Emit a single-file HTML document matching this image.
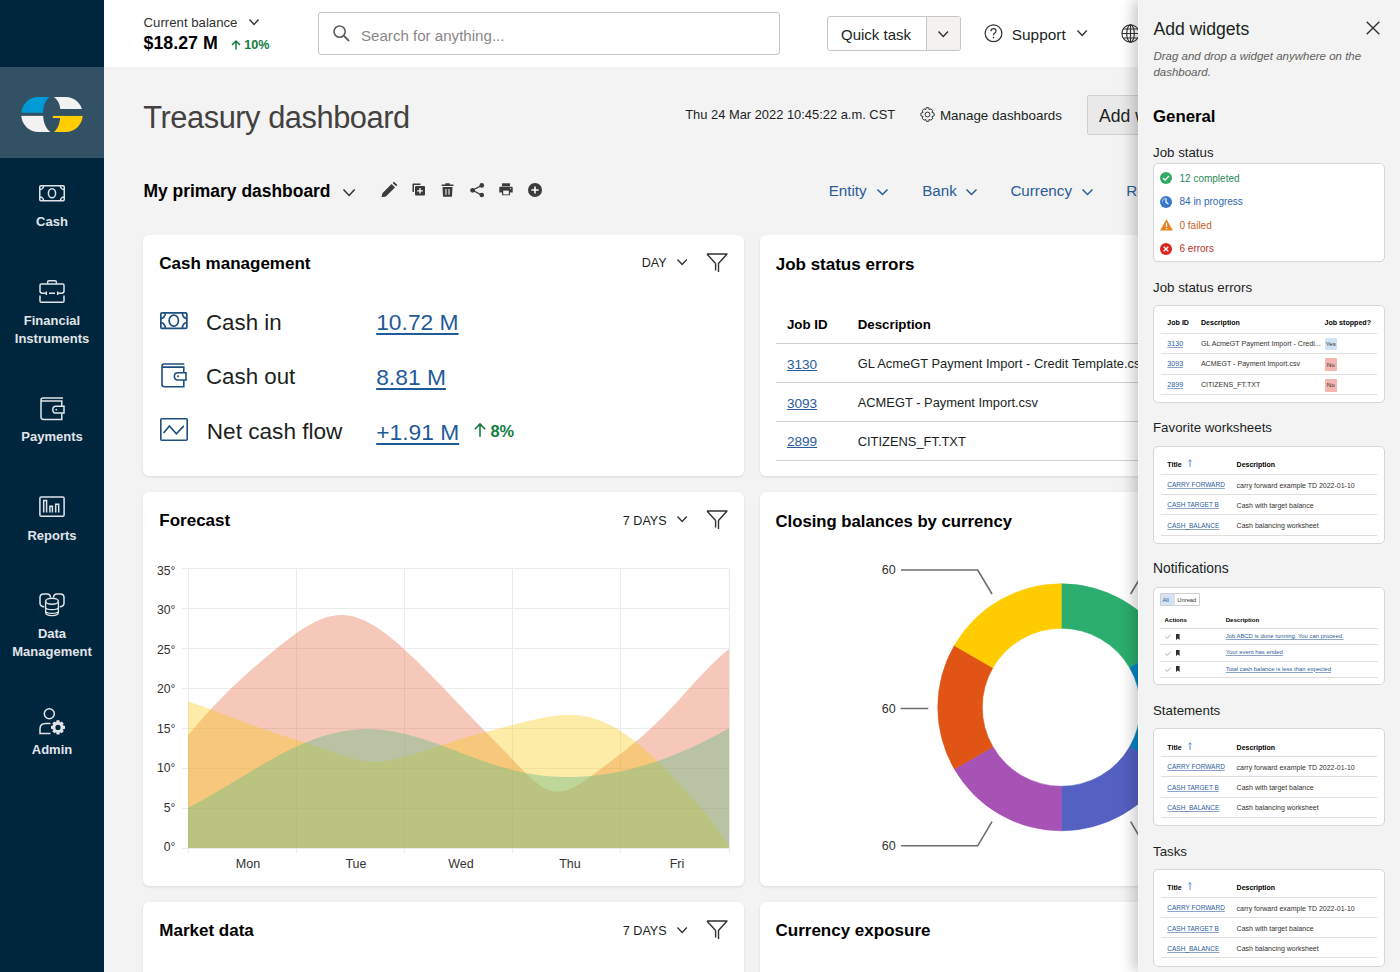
<!DOCTYPE html><html><head><meta charset='utf-8'><style>
*{margin:0;padding:0;box-sizing:border-box}
html,body{width:1400px;height:972px;overflow:hidden;background:#f3f3f3;font-family:"Liberation Sans",sans-serif;color:#201f1e}
.t{position:absolute;white-space:nowrap;line-height:1}
.a{position:absolute}
svg{position:absolute;overflow:visible}
.card{position:absolute;background:#fff;border-radius:6px;box-shadow:0 1px 3px rgba(0,0,0,0.10)}
.pcard{position:absolute;background:#fff;border:1px solid #d6d6d6;border-radius:5px;left:1152.5px;width:232px}
.lnk{color:#2b5c9a;text-decoration:underline}
</style></head><body>
<div class='a' style='left:0;top:0;width:104px;height:972px;background:#00263d'></div>
<div class='a' style='left:0;top:67px;width:104px;height:91px;background:#335165'></div>
<svg style='left:0;top:67px' width='104' height='91' viewBox='0 67 104 91'>
<defs><clipPath id='lg'><ellipse cx='38.5' cy='114.5' rx='17.3' ry='17.6'/><ellipse cx='65.5' cy='114.5' rx='17.3' ry='17.6'/><rect x='38.5' y='96.9' width='27' height='35.2'/></clipPath></defs>
<g clip-path='url(#lg)'>
<rect x='20' y='96' width='32' height='17.6' fill='#009bd6'/>
<rect x='20' y='115.7' width='32' height='17' fill='#f2f2f2'/>
<rect x='52.8' y='96' width='32' height='17.6' fill='#f2f2f2'/>
<rect x='52.8' y='115.7' width='32' height='17' fill='#ffcd00'/>
</g>
<path d='M52,96 C46,98 43.1,105 43.1,112.8 L20,112.8 L20,115.6 L43.1,115.6 C43.5,123 46,130 52,133 C56.5,131 59.8,125 60.1,117.9 L52,117.9 L52,115.7 L86,115.7 L86,109.1 L60.3,109.1 C59.5,102 56.5,98 52,96 Z' fill='#335165'/>
</svg>
<svg style='left:39px;top:185px' width='26' height='17' viewBox='0 0 26 17' fill='none' stroke='#e1e5ea' stroke-width='1.5'>
<rect x='0.75' y='0.75' width='24.5' height='15' rx='1.2'/><ellipse cx='13' cy='8.25' rx='3.6' ry='4.6'/>
<path d='M0.75,4.6 A3.9,3.9 0 0 0 4.6,0.75 M21.4,0.75 A3.9,3.9 0 0 0 25.25,4.6 M25.25,11.9 A3.9,3.9 0 0 0 21.4,15.75 M4.6,15.75 A3.9,3.9 0 0 0 0.75,11.9'/>
</svg>
<div class='t' style='left:0;width:104px;text-align:center;top:215.3px;font-size:13px;font-weight:700;color:#e1e5ea'>Cash</div>
<svg style='left:39px;top:280px' width='26' height='23' viewBox='0 0 26 23' fill='none' stroke='#e1e5ea' stroke-width='1.5'>
<path d='M8.6,3.8 V2.2 Q8.6,0.75 10,0.75 H16 Q17.4,0.75 17.4,2.2 V3.8'/>
<path d='M1,11 V5.3 Q1,3.9 2.4,3.9 H23.6 Q25,3.9 25,5.3 V11 Q25,13.2 22.5,13.2 H19.2 M6.8,13.2 H3.5 Q1,13.2 1,11'/>
<path d='M7.3,11.6 V15 M18.7,11.6 V15 M10,13.2 H16'/>
<path d='M1,15.6 V21 Q1,22.25 2.4,22.25 H23.6 Q25,22.25 25,21 V15.6'/>
</svg>
<div class='t' style='left:0;width:104px;text-align:center;top:313.8px;font-size:13px;font-weight:700;color:#e1e5ea'>Financial</div>
<div class='t' style='left:0;width:104px;text-align:center;top:331.9px;font-size:13px;font-weight:700;color:#e1e5ea'>Instruments</div>
<svg style='left:40px;top:397px' width='25' height='24' viewBox='0 0 25 24' fill='none' stroke='#e1e5ea' stroke-width='1.5'>
<path d='M23,0.9 H3 Q1,0.9 1,3 V20 Q1,22.4 3.4,22.4 H21.8 V16.2 M21.8,9.2 V3.9 H1.2'/>
<path d='M24,9.3 H15.8 Q12.8,9.3 12.8,12.7 Q12.8,16.1 15.8,16.1 H24 Z'/>
<circle cx='16.3' cy='12.7' r='0.9' fill='#e1e5ea' stroke='none'/>
</svg>
<div class='t' style='left:0;width:104px;text-align:center;top:430.0px;font-size:13px;font-weight:700;color:#e1e5ea'>Payments</div>
<svg style='left:39px;top:496px' width='26' height='22' viewBox='0 0 26 22' fill='none' stroke='#e1e5ea' stroke-width='1.5'>
<rect x='0.9' y='0.9' width='24.2' height='19.4' rx='1.3'/>
<path d='M4.7,16.6 V4.5 H7.6 V16.6 M10.9,16.6 V10.2 H13.4 V16.6 M16.7,16.6 V8.3 H19.7 V16.6'/>
</svg>
<div class='t' style='left:0;width:104px;text-align:center;top:528.6px;font-size:13px;font-weight:700;color:#e1e5ea'>Reports</div>
<svg style='left:39px;top:593px' width='26' height='24' viewBox='0 0 26 24' fill='none' stroke='#e1e5ea' stroke-width='1.5'>
<path d='M5.4,13.7 Q1,13.7 1,10 V4.4 Q1,0.9 4.6,0.9 H8 Q11.4,0.9 11.5,4.6'/>
<path d='M20.6,13.7 Q25,13.7 25,10 V4.4 Q25,0.9 21.4,0.9 H18 Q14.6,0.9 14.5,4.6'/>
<ellipse cx='13' cy='8.3' rx='6.4' ry='3'/>
<path d='M6.6,8.3 V19.5 Q6.6,22.6 13,22.6 Q19.4,22.6 19.4,19.5 V8.3 M6.6,14.2 Q6.6,16.6 13,16.6 Q19.4,16.6 19.4,14.2 M6.6,18 Q6.6,20.4 13,20.4 Q19.4,20.4 19.4,18' stroke-width='1.3'/>
</svg>
<div class='t' style='left:0;width:104px;text-align:center;top:626.8px;font-size:13px;font-weight:700;color:#e1e5ea'>Data</div>
<div class='t' style='left:0;width:104px;text-align:center;top:645.1px;font-size:13px;font-weight:700;color:#e1e5ea'>Management</div>
<svg style='left:39px;top:708px' width='27' height='28' viewBox='0 0 27 28' fill='none' stroke='#e1e5ea' stroke-width='1.5'>
<circle cx='10.3' cy='5.8' r='5'/>
<path d='M11.5,15.6 H6.5 Q1,15.6 1,21 V25.6 H11.5'/>
<g fill='#e1e5ea' stroke='none' transform='translate(19,19.4)'>
<path d='M-1.4,-7.2 H1.4 L1.9,-4.9 L3.7,-5.9 L5.7,-3.9 L4.7,-2.1 L7,-1.4 V1.4 L4.7,2.1 L5.7,3.9 L3.7,5.9 L1.9,4.9 L1.4,7.2 H-1.4 L-1.9,4.9 L-3.7,5.9 L-5.7,3.9 L-4.7,2.1 L-7,1.4 V-1.4 L-4.7,-2.1 L-5.7,-3.9 L-3.7,-5.9 L-1.9,-4.9 Z M0,-2.6 A2.6,2.6 0 1 0 0,2.6 A2.6,2.6 0 1 0 0,-2.6 Z' fill-rule='evenodd'/>
<circle r='5.2' fill='none' stroke='#e1e5ea' stroke-width='0'/>
</g>
</svg>
<div class='t' style='left:0;width:104px;text-align:center;top:743.2px;font-size:13px;font-weight:700;color:#e1e5ea'>Admin</div>
<div class='a' style='left:104px;top:0;width:1296px;height:67px;background:#fff'></div>
<div class='t' style='left:143.6px;top:16.0px;font-size:13.2px;color:#323130;'>Current balance</div>
<svg style='left:249px;top:19px' width='10' height='6' viewBox='0 0 10 6'><path d='M0.5,0.5 L5.0,5.5 L9.5,0.5' fill='none' stroke='#323130' stroke-width='1.4'/></svg>
<div class='t' style='left:143.6px;top:34.6px;font-size:17.8px;font-weight:700;color:#000;'>$18.27 M</div>
<svg style='left:230.5px;top:40px' width='10' height='10' viewBox='0 0 10 10'><path d='M5,9.6 V1 M1,5 L5,1 L9,5' fill='none' stroke='#107c41' stroke-width='1.5'/></svg>
<div class='t' style='left:244.3px;top:39.0px;font-size:12.6px;font-weight:700;color:#107c41;'>10%</div>
<div class='a' style='left:318px;top:11.5px;width:462px;height:43.5px;border:1px solid #c8c6c4;border-radius:3px;background:#fff'></div>
<svg style='left:332.5px;top:25px' width='17' height='17' viewBox='0 0 17 17'><circle cx='6.6' cy='6.6' r='5.6' fill='none' stroke='#605e5c' stroke-width='1.6'/><path d='M10.7,10.7 L16,16' stroke='#605e5c' stroke-width='1.8'/></svg>
<div class='t' style='left:361.0px;top:27.6px;font-size:15.1px;color:#8a8886;'>Search for anything...</div>
<div class='a' style='left:826.5px;top:16px;width:134px;height:34.5px;border:1px solid #c8c6c4;border-radius:3px;background:#fff;overflow:hidden'><div class='a' style='left:98px;top:0;width:36px;height:34px;background:#f3f2f1;border-left:1px solid #c8c6c4'></div></div>
<div class='t' style='left:841.0px;top:26.7px;font-size:15px;color:#201f1e;'>Quick task</div>
<svg style='left:937.8px;top:30.5px' width='10.5' height='6' viewBox='0 0 10.5 6'><path d='M0.5,0.5 L5.25,5.5 L10.0,0.5' fill='none' stroke='#323130' stroke-width='1.4'/></svg>
<svg style='left:984px;top:24px' width='19' height='19' viewBox='0 0 19 19'><circle cx='9.5' cy='9.3' r='8.4' fill='none' stroke='#323130' stroke-width='1.2'/><path d='M7,7.3 Q7,4.7 9.5,4.7 Q12,4.7 12,7 Q12,8.6 10.3,9.4 Q9.5,9.8 9.5,11.3' fill='none' stroke='#323130' stroke-width='1.2'/><circle cx='9.5' cy='13.6' r='0.8' fill='#323130'/></svg>
<div class='t' style='left:1011.8px;top:26.8px;font-size:15.4px;color:#201f1e;'>Support</div>
<svg style='left:1076.7px;top:30px' width='10.3' height='6' viewBox='0 0 10.3 6'><path d='M0.5,0.5 L5.15,5.5 L9.8,0.5' fill='none' stroke='#323130' stroke-width='1.4'/></svg>
<svg style='left:1121px;top:24px' width='19' height='19' viewBox='0 0 19 19' fill='none' stroke='#323130' stroke-width='1.1'><circle cx='9.5' cy='9.5' r='8.6'/><ellipse cx='9.5' cy='9.5' rx='3.8' ry='8.6'/><path d='M1,9.5 H18 M2.2,5 H16.8 M2.2,14 H16.8 M9.5,1 V18'/></svg>
<div class='t' style='left:143.3px;top:102.6px;font-size:30.8px;color:#424140;letter-spacing:-0.45px;'>Treasury dashboard</div>
<div class='t' style='left:685.2px;top:109.2px;font-size:12.9px;color:#201f1e;'>Thu 24 Mar 2022 10:45:22 a.m. CST</div>
<svg style='left:920px;top:107px' width='15' height='15' viewBox='-7.5 -7.5 15 15'><path d='M-1.3,-6.8 H1.3 L1.7,-4.8 L3.4,-5.7 L5.3,-3.9 L4.4,-2.1 L6.6,-1.3 V1.3 L4.4,2.1 L5.3,3.9 L3.4,5.7 L1.7,4.8 L1.3,6.8 H-1.3 L-1.7,4.8 L-3.4,5.7 L-5.3,3.9 L-4.4,2.1 L-6.6,1.3 V-1.3 L-4.4,-2.1 L-5.3,-3.9 L-3.4,-5.7 L-1.7,-4.8 Z' fill='none' stroke='#323130' stroke-width='1' stroke-linejoin='round'/><circle r='2.4' fill='none' stroke='#323130' stroke-width='1'/></svg>
<div class='t' style='left:939.9px;top:108.6px;font-size:13.4px;color:#201f1e;'>Manage dashboards</div>
<div class='a' style='left:1087px;top:94.5px;width:140px;height:40px;border:1px solid #d2d0ce;border-radius:2px;background:#e9e9e9'></div>
<div class='t' style='left:1099.0px;top:107.5px;font-size:17.6px;color:#201f1e;'>Add widgets</div>
<div class='t' style='left:143.5px;top:182.7px;font-size:17.45px;font-weight:700;color:#000;'>My primary dashboard</div>
<svg style='left:342.8px;top:188.5px' width='12.2' height='7' viewBox='0 0 12.2 7'><path d='M0.5,0.5 L6.1,6.5 L11.7,0.5' fill='none' stroke='#323130' stroke-width='1.5'/></svg>
<svg style='left:381px;top:182px' width='16' height='16' viewBox='0 0 16 16'><path d='M0.6,15.2 L1.4,11.2 L10.6,2 L14,5.4 L4.8,14.6 Z M11.7,0.9 L13,-0.3 L16.3,3 L15.1,4.3 Z' fill='#3b3b3b'/></svg>
<svg style='left:411.5px;top:183px' width='14' height='13' viewBox='0 0 14 13'><path d='M0.5,9 V1.3 Q0.5,0.5 1.3,0.5 H8.5 V2 H2 V9 Z' fill='#3b3b3b'/><rect x='3' y='3' width='10' height='9.6' rx='1' fill='#3b3b3b'/><path d='M8,5 V10.6 M5.2,7.8 H10.8' stroke='#fff' stroke-width='1.3'/></svg>
<svg style='left:441px;top:182.5px' width='13' height='14' viewBox='0 0 13 14'><path d='M4.3,0.3 H8.7 V1.4 H12.4 V3 H0.6 V1.4 H4.3 Z' fill='#3b3b3b'/><path d='M1.5,4 H11.5 L11,13.2 Q11,13.8 10.3,13.8 H2.7 Q2,13.8 2,13.2 Z' fill='#3b3b3b'/><path d='M5,6 V11.8 M8,6 V11.8' stroke='#f3f3f3' stroke-width='1.1'/></svg>
<svg style='left:469.5px;top:182.5px' width='15' height='15' viewBox='0 0 15 15'><path d='M2.6,7.3 L11.7,2.4 M2.6,7.3 L11.7,12.1' stroke='#3b3b3b' stroke-width='1.3'/><circle cx='2.6' cy='7.3' r='2.4' fill='#3b3b3b'/><circle cx='11.8' cy='2.4' r='2.3' fill='#3b3b3b'/><circle cx='11.8' cy='12' r='2.3' fill='#3b3b3b'/></svg>
<svg style='left:498.5px;top:183px' width='14' height='13' viewBox='0 0 14 13'><path d='M3,0.3 H11 V3.3 H3 Z' fill='#3b3b3b'/><path d='M1,3.8 H13 Q13.7,3.8 13.7,4.6 V9.6 H11 V12.2 H3 V9.6 H0.3 V4.6 Q0.3,3.8 1,3.8 Z' fill='#3b3b3b'/><rect x='4.2' y='7.6' width='5.6' height='3.8' fill='#f3f3f3'/><circle cx='11.6' cy='5.6' r='0.6' fill='#f3f3f3'/></svg>
<svg style='left:527.5px;top:182.5px' width='15' height='15' viewBox='0 0 15 15'><circle cx='7' cy='7' r='7' fill='#3b3b3b'/><path d='M7,3.4 V10.6 M3.4,7 H10.6' stroke='#fff' stroke-width='1.6'/></svg>
<div class='t' style='left:828.7px;top:183.3px;font-size:15.2px;color:#2b5c9a;'>Entity</div>
<svg style='left:877px;top:188.7px' width='11' height='6' viewBox='0 0 11 6'><path d='M0.5,0.5 L5.5,5.5 L10.5,0.5' fill='none' stroke='#2b5c9a' stroke-width='1.5'/></svg>
<div class='t' style='left:922.2px;top:183.3px;font-size:15.2px;color:#2b5c9a;'>Bank</div>
<svg style='left:966.3px;top:188.7px' width='11' height='6' viewBox='0 0 11 6'><path d='M0.5,0.5 L5.5,5.5 L10.5,0.5' fill='none' stroke='#2b5c9a' stroke-width='1.5'/></svg>
<div class='t' style='left:1010.4px;top:183.3px;font-size:15.2px;color:#2b5c9a;'>Currency</div>
<svg style='left:1081.7px;top:188.7px' width='11' height='6' viewBox='0 0 11 6'><path d='M0.5,0.5 L5.5,5.5 L10.5,0.5' fill='none' stroke='#2b5c9a' stroke-width='1.5'/></svg>
<div class='t' style='left:1126.3px;top:183.3px;font-size:15.2px;color:#2b5c9a;'>Reporting</div>
<div class='card' style='left:143px;top:235px;width:601px;height:241px'></div>
<div class='card' style='left:760px;top:235px;width:601px;height:241px'></div>
<div class='card' style='left:143px;top:492px;width:601px;height:394px'></div>
<div class='card' style='left:760px;top:492px;width:601px;height:394px'></div>
<div class='card' style='left:143px;top:902px;width:601px;height:120px'></div>
<div class='card' style='left:760px;top:902px;width:601px;height:120px'></div>
<div class='t' style='left:159.3px;top:255.4px;font-size:17px;font-weight:700;color:#000;'>Cash management</div>
<div class='t' style='left:641.7px;top:257.4px;font-size:12.6px;color:#201f1e;'>DAY</div>
<svg style='left:677px;top:259.3px' width='10.3' height='6' viewBox='0 0 10.3 6'><path d='M0.5,0.5 L5.15,5.5 L9.8,0.5' fill='none' stroke='#323130' stroke-width='1.3'/></svg>
<svg style='left:705.8px;top:253px' width='22' height='20' viewBox='0 0 22 20'><path d='M1,1 H21 L12.5,10.5 V19 M9.6,10.5 L1,1 M9.6,10.5 V17.6' fill='none' stroke='#323130' stroke-width='1.4' stroke-linejoin='round'/></svg>
<svg style='left:160px;top:312px' width='28' height='18' viewBox='0 0 28 18' fill='none' stroke='#1d4f80' stroke-width='1.7'>
<rect x='0.85' y='0.85' width='26' height='15.6' rx='1.2'/><ellipse cx='13.8' cy='8.6' rx='4.7' ry='5.5'/>
<path d='M0.85,6.6 A4.6,5.8 0 0 0 5.4,0.85 M22.3,0.85 A4.6,5.8 0 0 0 26.85,6.6 M26.85,10.6 A4.6,5.8 0 0 0 22.3,16.45 M5.4,16.45 A4.6,5.8 0 0 0 0.85,10.6'/>
</svg>
<svg style='left:161px;top:363px' width='26' height='25' viewBox='0 0 26 25' fill='none' stroke='#1d4f80' stroke-width='1.6'>
<path d='M23.3,1 H3 Q1,1 1,3 V21.3 Q1,23.7 3.4,23.7 H22.8 V17 M22.8,9.7 V4.1 H1.2'/>
<path d='M25,9.7 H16.6 Q13.4,9.7 13.4,13.35 Q13.4,17 16.6,17 H25 Z'/>
<circle cx='17' cy='13.35' r='1' fill='#1d4f80' stroke='none'/>
</svg>
<svg style='left:160px;top:418px' width='28' height='23' viewBox='0 0 28 23' fill='none' stroke='#1d4f80' stroke-width='1.6'>
<rect x='0.8' y='0.8' width='26.4' height='21.4' rx='1'/>
<path d='M3.6,15.1 L9.4,7.9 L16.4,15.8 L23.8,7.9'/>
</svg>
<div class='t' style='left:206.0px;top:311.8px;font-size:22.3px;color:#201f1e;'>Cash in</div>
<div class='t' style='left:206.0px;top:366.1px;font-size:22.3px;color:#201f1e;'>Cash out</div>
<div class='t' style='left:206.8px;top:420.6px;font-size:22.6px;color:#201f1e;'>Net cash flow</div>
<div class='t' style='left:376.2px;top:311.4px;font-size:22.8px;color:#1f5b99;text-decoration:underline;text-underline-offset:3px;text-decoration-thickness:1.5px;'>10.72 M</div>
<div class='t' style='left:376.2px;top:365.7px;font-size:22.8px;color:#1f5b99;text-decoration:underline;text-underline-offset:3px;text-decoration-thickness:1.5px;'>8.81 M</div>
<div class='t' style='left:376.2px;top:420.5px;font-size:22.8px;color:#1f5b99;text-decoration:underline;text-underline-offset:3px;text-decoration-thickness:1.5px;'>+1.91 M</div>
<svg style='left:474px;top:422.5px' width='12' height='14' viewBox='0 0 12 14'><path d='M6,13.8 V1 M0.8,6.2 L6,1 L11.2,6.2' fill='none' stroke='#107c41' stroke-width='1.6'/></svg>
<div class='t' style='left:490.5px;top:423.0px;font-size:16.4px;font-weight:700;color:#107c41;'>8%</div>
<div class='t' style='left:775.7px;top:255.8px;font-size:17px;font-weight:700;color:#000;'>Job status errors</div>
<div class='t' style='left:786.9px;top:317.7px;font-size:13.3px;font-weight:700;color:#000;'>Job ID</div>
<div class='t' style='left:857.7px;top:317.7px;font-size:13.3px;font-weight:700;color:#000;'>Description</div>
<div class='a' style='left:775.5px;top:342.9px;width:600px;height:1px;background:#d2d0ce'></div>
<div class='a' style='left:775.5px;top:381.7px;width:600px;height:1px;background:#d2d0ce'></div>
<div class='a' style='left:775.5px;top:420.5px;width:600px;height:1px;background:#d2d0ce'></div>
<div class='a' style='left:775.5px;top:459.5px;width:600px;height:1px;background:#d2d0ce'></div>
<div class='t' style='left:786.9px;top:357.6px;font-size:13.6px;color:#2b5c9a;text-decoration:underline;'>3130</div>
<div class='t' style='left:857.7px;top:358.2px;font-size:12.9px;color:#201f1e;'>GL AcmeGT Payment Import - Credit Template.csv</div>
<div class='t' style='left:786.9px;top:396.5px;font-size:13.6px;color:#2b5c9a;text-decoration:underline;'>3093</div>
<div class='t' style='left:857.7px;top:397.1px;font-size:12.9px;color:#201f1e;'>ACMEGT - Payment Import.csv</div>
<div class='t' style='left:786.9px;top:435.3px;font-size:13.6px;color:#2b5c9a;text-decoration:underline;'>2899</div>
<div class='t' style='left:857.7px;top:435.9px;font-size:12.9px;color:#201f1e;'>CITIZENS_FT.TXT</div>
<div class='t' style='left:159.3px;top:512.0px;font-size:17px;font-weight:700;color:#000;'>Forecast</div>
<div class='t' style='left:622.8px;top:514.5px;font-size:12.6px;color:#201f1e;'>7 DAYS</div>
<svg style='left:677px;top:515.8px' width='10.3' height='6' viewBox='0 0 10.3 6'><path d='M0.5,0.5 L5.15,5.5 L9.8,0.5' fill='none' stroke='#323130' stroke-width='1.3'/></svg>
<svg style='left:705.8px;top:510px' width='22' height='20' viewBox='0 0 22 20'><path d='M1,1 H21 L12.5,10.5 V19 M9.6,10.5 L1,1 M9.6,10.5 V17.6' fill='none' stroke='#323130' stroke-width='1.4' stroke-linejoin='round'/></svg>
<svg style='left:0;top:0' width='1400' height='972' viewBox='0 0 1400 972'><path d='M182,848.5 H729.5' stroke='#ebebeb' stroke-width='1'/><path d='M182,808.5 H729.5' stroke='#ebebeb' stroke-width='1'/><path d='M182,768.5 H729.5' stroke='#ebebeb' stroke-width='1'/><path d='M182,728.5 H729.5' stroke='#ebebeb' stroke-width='1'/><path d='M182,688.5 H729.5' stroke='#ebebeb' stroke-width='1'/><path d='M182,648.5 H729.5' stroke='#ebebeb' stroke-width='1'/><path d='M182,608.5 H729.5' stroke='#ebebeb' stroke-width='1'/><path d='M182,568.5 H729.5' stroke='#ebebeb' stroke-width='1'/><path d='M188.5,569 V853' stroke='#ebebeb' stroke-width='1'/><path d='M296.5,569 V853' stroke='#ebebeb' stroke-width='1'/><path d='M404.5,569 V853' stroke='#ebebeb' stroke-width='1'/><path d='M512.5,569 V853' stroke='#ebebeb' stroke-width='1'/><path d='M620.5,569 V853' stroke='#ebebeb' stroke-width='1'/><path d='M729.5,569 V853' stroke='#ebebeb' stroke-width='1'/><path d='M188.0,735.3 L190.7,732.2 L193.4,728.9 L196.2,725.7 L198.9,722.5 L201.6,719.4 L204.3,716.3 L207.0,713.3 L209.7,710.4 L212.5,707.4 L215.2,704.5 L217.9,701.7 L220.6,698.9 L223.3,696.1 L226.1,693.4 L228.8,690.7 L231.5,688.1 L234.2,685.5 L236.9,682.9 L239.7,680.4 L242.4,677.8 L245.1,675.4 L247.8,672.9 L250.5,670.5 L253.2,668.1 L256.0,665.7 L258.7,663.4 L261.4,661.0 L264.1,658.7 L266.8,656.5 L269.6,654.2 L272.3,652.0 L275.0,649.7 L277.7,647.5 L280.4,645.3 L283.2,643.2 L285.9,641.1 L288.6,639.0 L291.3,636.9 L294.0,634.9 L296.7,633.0 L299.5,631.1 L302.2,629.3 L304.9,627.6 L307.6,626.0 L310.3,624.4 L313.1,623.0 L315.8,621.6 L318.5,620.4 L321.2,619.2 L323.9,618.2 L326.6,617.3 L329.4,616.6 L332.1,616.0 L334.8,615.5 L337.5,615.2 L340.2,615.0 L343.0,615.0 L345.7,615.2 L348.4,615.5 L351.1,616.0 L353.8,616.6 L356.6,617.4 L359.3,618.4 L362.0,619.4 L364.7,620.6 L367.4,622.0 L370.1,623.4 L372.9,625.0 L375.6,626.6 L378.3,628.4 L381.0,630.3 L383.7,632.2 L386.5,634.3 L389.2,636.4 L391.9,638.6 L394.6,640.8 L397.3,643.1 L400.1,645.5 L402.8,647.9 L405.5,650.4 L408.2,652.9 L410.9,655.4 L413.6,658.0 L416.4,660.6 L419.1,663.3 L421.8,666.0 L424.5,668.7 L427.2,671.4 L430.0,674.1 L432.7,676.9 L435.4,679.7 L438.1,682.5 L440.8,685.3 L443.5,688.1 L446.3,691.0 L449.0,693.8 L451.7,696.7 L454.4,699.5 L457.1,702.4 L459.9,705.2 L462.6,708.1 L465.3,710.9 L468.0,713.8 L470.7,716.6 L473.5,719.4 L476.2,722.2 L478.9,725.0 L481.6,727.8 L484.3,730.5 L487.0,733.3 L489.8,736.0 L492.5,738.8 L495.2,741.6 L497.9,744.3 L500.6,747.1 L503.4,749.9 L506.1,752.7 L508.8,755.5 L511.5,758.4 L514.2,761.2 L516.9,764.1 L519.7,767.0 L522.4,769.8 L525.1,772.6 L527.8,775.3 L530.5,777.8 L533.3,780.2 L536.0,782.5 L538.7,784.6 L541.4,786.4 L544.1,788.0 L546.9,789.3 L549.6,790.4 L552.3,791.1 L555.0,791.5 L557.7,791.6 L560.4,791.4 L563.2,790.9 L565.9,790.3 L568.6,789.4 L571.3,788.3 L574.0,787.0 L576.8,785.5 L579.5,784.0 L582.2,782.2 L584.9,780.4 L587.6,778.5 L590.4,776.6 L593.1,774.6 L595.8,772.6 L598.5,770.5 L601.2,768.5 L603.9,766.5 L606.7,764.5 L609.4,762.4 L612.1,760.4 L614.8,758.3 L617.5,756.2 L620.3,754.1 L623.0,752.0 L625.7,749.9 L628.4,747.7 L631.1,745.5 L633.8,743.3 L636.6,741.0 L639.3,738.7 L642.0,736.4 L644.7,734.0 L647.4,731.6 L650.2,729.1 L652.9,726.6 L655.6,724.0 L658.3,721.3 L661.0,718.6 L663.8,715.9 L666.5,713.1 L669.2,710.2 L671.9,707.3 L674.6,704.4 L677.3,701.4 L680.1,698.5 L682.8,695.5 L685.5,692.5 L688.2,689.5 L690.9,686.5 L693.7,683.5 L696.4,680.6 L699.1,677.7 L701.8,674.8 L704.5,671.9 L707.3,669.1 L710.0,666.3 L712.7,663.6 L715.4,661.0 L718.1,658.4 L720.8,655.9 L723.6,653.5 L726.3,651.2 L729.0,648.9 L729,848.0 L188,848.0 Z' fill='rgba(229,110,70,0.38)'/><path d='M188.0,701.4 L190.7,702.3 L193.4,703.2 L196.2,704.2 L198.9,705.1 L201.6,706.1 L204.3,707.1 L207.0,708.1 L209.7,709.1 L212.5,710.1 L215.2,711.1 L217.9,712.1 L220.6,713.1 L223.3,714.2 L226.1,715.2 L228.8,716.2 L231.5,717.3 L234.2,718.3 L236.9,719.3 L239.7,720.3 L242.4,721.4 L245.1,722.4 L247.8,723.4 L250.5,724.4 L253.2,725.4 L256.0,726.4 L258.7,727.4 L261.4,728.4 L264.1,729.3 L266.8,730.3 L269.6,731.2 L272.3,732.1 L275.0,733.1 L277.7,734.0 L280.4,734.9 L283.2,735.7 L285.9,736.6 L288.6,737.5 L291.3,738.3 L294.0,739.2 L296.7,740.0 L299.5,740.9 L302.2,741.7 L304.9,742.6 L307.6,743.5 L310.3,744.4 L313.1,745.3 L315.8,746.2 L318.5,747.1 L321.2,748.0 L323.9,749.0 L326.6,750.0 L329.4,751.0 L332.1,751.9 L334.8,752.9 L337.5,753.9 L340.2,754.8 L343.0,755.7 L345.7,756.6 L348.4,757.4 L351.1,758.2 L353.8,758.9 L356.6,759.6 L359.3,760.1 L362.0,760.7 L364.7,761.1 L367.4,761.4 L370.1,761.6 L372.9,761.8 L375.6,761.8 L378.3,761.7 L381.0,761.5 L383.7,761.2 L386.5,760.8 L389.2,760.4 L391.9,759.8 L394.6,759.3 L397.3,758.6 L400.1,757.9 L402.8,757.2 L405.5,756.5 L408.2,755.7 L410.9,754.9 L413.6,754.1 L416.4,753.3 L419.1,752.5 L421.8,751.6 L424.5,750.8 L427.2,749.9 L430.0,749.0 L432.7,748.1 L435.4,747.2 L438.1,746.3 L440.8,745.4 L443.5,744.6 L446.3,743.7 L449.0,742.8 L451.7,741.9 L454.4,741.0 L457.1,740.1 L459.9,739.3 L462.6,738.4 L465.3,737.6 L468.0,736.8 L470.7,736.0 L473.5,735.2 L476.2,734.4 L478.9,733.7 L481.6,733.0 L484.3,732.3 L487.0,731.6 L489.8,730.9 L492.5,730.2 L495.2,729.5 L497.9,728.8 L500.6,728.1 L503.4,727.4 L506.1,726.7 L508.8,726.0 L511.5,725.2 L514.2,724.5 L516.9,723.8 L519.7,723.2 L522.4,722.5 L525.1,721.8 L527.8,721.1 L530.5,720.5 L533.3,719.9 L536.0,719.3 L538.7,718.7 L541.4,718.1 L544.1,717.6 L546.9,717.1 L549.6,716.6 L552.3,716.2 L555.0,715.9 L557.7,715.6 L560.4,715.3 L563.2,715.1 L565.9,715.0 L568.6,715.0 L571.3,715.0 L574.0,715.1 L576.8,715.3 L579.5,715.5 L582.2,715.9 L584.9,716.4 L587.6,716.9 L590.4,717.6 L593.1,718.3 L595.8,719.2 L598.5,720.1 L601.2,721.1 L603.9,722.2 L606.7,723.4 L609.4,724.7 L612.1,726.1 L614.8,727.6 L617.5,729.1 L620.3,730.8 L623.0,732.5 L625.7,734.4 L628.4,736.3 L631.1,738.3 L633.8,740.4 L636.6,742.5 L639.3,744.7 L642.0,747.0 L644.7,749.4 L647.4,751.8 L650.2,754.3 L652.9,756.9 L655.6,759.4 L658.3,762.1 L661.0,764.8 L663.8,767.5 L666.5,770.3 L669.2,773.1 L671.9,775.9 L674.6,778.7 L677.3,781.6 L680.1,784.5 L682.8,787.5 L685.5,790.4 L688.2,793.4 L690.9,796.4 L693.7,799.4 L696.4,802.5 L699.1,805.7 L701.8,808.9 L704.5,812.2 L707.3,815.6 L710.0,819.1 L712.7,822.7 L715.4,826.4 L718.1,830.2 L720.8,834.2 L723.6,838.3 L726.3,842.6 L729.0,847.1 L729,848.0 L188,848.0 Z' fill='rgba(250,200,20,0.37)'/><path d='M188.0,807.7 L190.7,806.3 L193.4,804.9 L196.2,803.5 L198.9,802.0 L201.6,800.5 L204.3,799.0 L207.0,797.5 L209.7,796.0 L212.5,794.4 L215.2,792.8 L217.9,791.2 L220.6,789.6 L223.3,788.0 L226.1,786.4 L228.8,784.8 L231.5,783.1 L234.2,781.5 L236.9,779.8 L239.7,778.2 L242.4,776.5 L245.1,774.9 L247.8,773.2 L250.5,771.6 L253.2,770.0 L256.0,768.4 L258.7,766.8 L261.4,765.2 L264.1,763.6 L266.8,762.0 L269.6,760.5 L272.3,759.0 L275.0,757.5 L277.7,756.0 L280.4,754.5 L283.2,753.1 L285.9,751.7 L288.6,750.3 L291.3,749.0 L294.0,747.7 L296.7,746.4 L299.5,745.2 L302.2,744.0 L304.9,742.8 L307.6,741.7 L310.3,740.7 L313.1,739.6 L315.8,738.6 L318.5,737.7 L321.2,736.8 L323.9,735.9 L326.6,735.1 L329.4,734.4 L332.1,733.6 L334.8,733.0 L337.5,732.4 L340.2,731.8 L343.0,731.3 L345.7,730.8 L348.4,730.4 L351.1,730.0 L353.8,729.7 L356.6,729.4 L359.3,729.3 L362.0,729.1 L364.7,729.0 L367.4,729.0 L370.1,729.0 L372.9,729.1 L375.6,729.3 L378.3,729.5 L381.0,729.7 L383.7,730.0 L386.5,730.4 L389.2,730.8 L391.9,731.2 L394.6,731.7 L397.3,732.3 L400.1,732.9 L402.8,733.5 L405.5,734.1 L408.2,734.8 L410.9,735.6 L413.6,736.3 L416.4,737.1 L419.1,737.9 L421.8,738.8 L424.5,739.6 L427.2,740.5 L430.0,741.4 L432.7,742.4 L435.4,743.3 L438.1,744.3 L440.8,745.3 L443.5,746.3 L446.3,747.3 L449.0,748.3 L451.7,749.3 L454.4,750.3 L457.1,751.3 L459.9,752.4 L462.6,753.4 L465.3,754.4 L468.0,755.4 L470.7,756.5 L473.5,757.5 L476.2,758.5 L478.9,759.5 L481.6,760.4 L484.3,761.4 L487.0,762.3 L489.8,763.3 L492.5,764.2 L495.2,765.0 L497.9,765.9 L500.6,766.7 L503.4,767.5 L506.1,768.3 L508.8,769.1 L511.5,769.8 L514.2,770.5 L516.9,771.1 L519.7,771.7 L522.4,772.3 L525.1,772.8 L527.8,773.3 L530.5,773.8 L533.3,774.3 L536.0,774.7 L538.7,775.0 L541.4,775.4 L544.1,775.7 L546.9,775.9 L549.6,776.2 L552.3,776.4 L555.0,776.6 L557.7,776.7 L560.4,776.8 L563.2,776.9 L565.9,776.9 L568.6,776.9 L571.3,776.9 L574.0,776.9 L576.8,776.8 L579.5,776.7 L582.2,776.5 L584.9,776.4 L587.6,776.2 L590.4,775.9 L593.1,775.7 L595.8,775.4 L598.5,775.1 L601.2,774.7 L603.9,774.3 L606.7,773.9 L609.4,773.5 L612.1,773.0 L614.8,772.5 L617.5,772.0 L620.3,771.4 L623.0,770.8 L625.7,770.2 L628.4,769.6 L631.1,768.9 L633.8,768.2 L636.6,767.5 L639.3,766.8 L642.0,766.0 L644.7,765.2 L647.4,764.4 L650.2,763.5 L652.9,762.6 L655.6,761.7 L658.3,760.8 L661.0,759.8 L663.8,758.9 L666.5,757.8 L669.2,756.8 L671.9,755.8 L674.6,754.7 L677.3,753.6 L680.1,752.4 L682.8,751.3 L685.5,750.1 L688.2,748.9 L690.9,747.7 L693.7,746.4 L696.4,745.2 L699.1,743.9 L701.8,742.5 L704.5,741.2 L707.3,739.8 L710.0,738.5 L712.7,737.0 L715.4,735.6 L718.1,734.2 L720.8,732.7 L723.6,731.2 L726.3,729.7 L729.0,728.8 L729,848.0 L188,848.0 Z' fill='rgba(110,190,135,0.44)'/></svg>
<div class='t' style='left:140px;width:35.5px;text-align:right;top:841.3px;font-size:12.2px;color:#323130'>0°</div>
<div class='t' style='left:140px;width:35.5px;text-align:right;top:801.8px;font-size:12.2px;color:#323130'>5°</div>
<div class='t' style='left:140px;width:35.5px;text-align:right;top:762.3px;font-size:12.2px;color:#323130'>10°</div>
<div class='t' style='left:140px;width:35.5px;text-align:right;top:722.7px;font-size:12.2px;color:#323130'>15°</div>
<div class='t' style='left:140px;width:35.5px;text-align:right;top:683.2px;font-size:12.2px;color:#323130'>20°</div>
<div class='t' style='left:140px;width:35.5px;text-align:right;top:643.7px;font-size:12.2px;color:#323130'>25°</div>
<div class='t' style='left:140px;width:35.5px;text-align:right;top:604.1px;font-size:12.2px;color:#323130'>30°</div>
<div class='t' style='left:140px;width:35.5px;text-align:right;top:564.6px;font-size:12.2px;color:#323130'>35°</div>
<div class='t' style='left:218px;width:60px;text-align:center;top:857.6px;font-size:12.5px;color:#323130'>Mon</div>
<div class='t' style='left:326px;width:60px;text-align:center;top:857.6px;font-size:12.5px;color:#323130'>Tue</div>
<div class='t' style='left:431px;width:60px;text-align:center;top:857.6px;font-size:12.5px;color:#323130'>Wed</div>
<div class='t' style='left:540px;width:60px;text-align:center;top:857.6px;font-size:12.5px;color:#323130'>Thu</div>
<div class='t' style='left:647px;width:60px;text-align:center;top:857.6px;font-size:12.5px;color:#323130'>Fri</div>
<div class='t' style='left:775.5px;top:514.0px;font-size:16.7px;font-weight:700;color:#000;'>Closing balances by currency</div>
<svg style='left:0;top:0' width='1400' height='972' viewBox='0 0 1400 972'><path d='M1061.30,583.80 A123.5,123.5 0 0 1 1168.25,645.55 L1129.72,667.80 A79,79 0 0 0 1061.30,628.30 Z' fill='#2bae6e' stroke='#2bae6e' stroke-width='0.6'/><path d='M1168.25,645.55 A123.5,123.5 0 0 1 1168.25,769.05 L1129.72,746.80 A79,79 0 0 0 1129.72,667.80 Z' fill='#0087c6' stroke='#0087c6' stroke-width='0.6'/><path d='M1168.25,769.05 A123.5,123.5 0 0 1 1061.30,830.80 L1061.30,786.30 A79,79 0 0 0 1129.72,746.80 Z' fill='#5460c2' stroke='#5460c2' stroke-width='0.6'/><path d='M1061.30,830.80 A123.5,123.5 0 0 1 954.35,769.05 L992.88,746.80 A79,79 0 0 0 1061.30,786.30 Z' fill='#a653b5' stroke='#a653b5' stroke-width='0.6'/><path d='M954.35,769.05 A123.5,123.5 0 0 1 954.35,645.55 L992.88,667.80 A79,79 0 0 0 992.88,746.80 Z' fill='#e05516' stroke='#e05516' stroke-width='0.6'/><path d='M954.35,645.55 A123.5,123.5 0 0 1 1061.30,583.80 L1061.30,628.30 A79,79 0 0 0 992.88,667.80 Z' fill='#ffcc00' stroke='#ffcc00' stroke-width='0.6'/><path d='M901,570 H977.7 L992,594 M900.6,708.5 H928.3 M901,845.8 H977.7 L992,821.6 M1130.6,594 L1145,570 M1130.6,821.6 L1145,845.8' fill='none' stroke='#6e6e6e' stroke-width='1.6'/></svg>
<div class='t' style='left:881.8px;top:564.1px;font-size:12.5px;color:#323130;'>60</div>
<div class='t' style='left:881.8px;top:702.8px;font-size:12.5px;color:#323130;'>60</div>
<div class='t' style='left:881.8px;top:839.9px;font-size:12.5px;color:#323130;'>60</div>
<div class='t' style='left:159.3px;top:922.4px;font-size:17px;font-weight:700;color:#000;'>Market data</div>
<div class='t' style='left:622.8px;top:924.9px;font-size:12.6px;color:#201f1e;'>7 DAYS</div>
<svg style='left:677px;top:926.9px' width='10.3' height='6' viewBox='0 0 10.3 6'><path d='M0.5,0.5 L5.15,5.5 L9.8,0.5' fill='none' stroke='#323130' stroke-width='1.3'/></svg>
<svg style='left:705.8px;top:920.4px' width='22' height='20' viewBox='0 0 22 20'><path d='M1,1 H21 L12.5,10.5 V19 M9.6,10.5 L1,1 M9.6,10.5 V17.6' fill='none' stroke='#323130' stroke-width='1.4' stroke-linejoin='round'/></svg>
<div class='t' style='left:775.5px;top:922.4px;font-size:17px;font-weight:700;color:#000;'>Currency exposure</div>
<div class='a' style='left:1138px;top:0;width:262px;height:972px;background:#f3f3f3;border-left:1px solid #f8f8f8;box-shadow:-5px 0 13px rgba(0,0,0,0.21)'></div>
<div class='t' style='left:1153.4px;top:20.5px;font-size:17.6px;color:#201f1e;'>Add widgets</div>
<svg style='left:1366px;top:21px' width='14' height='14' viewBox='0 0 14 14'><path d='M0.7,0.7 L13.3,13.3 M13.3,0.7 L0.7,13.3' stroke='#323130' stroke-width='1.4'/></svg>
<div class='t' style='left:1153.4px;top:50.7px;font-size:11.5px;color:#605e5c;font-style:italic;'>Drag and drop a widget anywhere on the</div>
<div class='t' style='left:1153.4px;top:66.5px;font-size:11.5px;color:#605e5c;font-style:italic;'>dashboard.</div>
<div class='t' style='left:1153.0px;top:108.6px;font-size:16.8px;font-weight:700;color:#000;'>General</div>
<div class='t' style='left:1153.0px;top:145.7px;font-size:13.3px;color:#201f1e;'>Job status</div>
<div class='pcard' style='top:163.2px;height:99px'></div>
<div class='t' style='left:1179.5px;top:173.8px;font-size:10px;color:#2b8a57;'>12 completed</div>
<svg style='left:1160px;top:172.3px' width='12' height='12' viewBox='0 0 12 12'><circle cx='6' cy='6' r='6' fill='#2eaa62'/><path d='M3,6.1 L5.1,8.1 L9,4' fill='none' stroke='#fff' stroke-width='1.4'/></svg>
<div class='t' style='left:1179.5px;top:197.1px;font-size:10px;color:#2f67ad;'>84 in progress</div>
<svg style='left:1160px;top:195.6px' width='12' height='12' viewBox='0 0 12 12'><circle cx='6' cy='6' r='6' fill='#3a78c8'/><path d='M6,2.6 V6.2 L8.4,8' fill='none' stroke='#fff' stroke-width='1.2'/><path d='M2.2,6 A3.8,3.8 0 0 1 6,2.2' fill='none' stroke='#fff' stroke-width='0.6'/></svg>
<div class='t' style='left:1179.5px;top:220.8px;font-size:10px;color:#c8601c;'>0 failed</div>
<svg style='left:1159.5px;top:218.8px' width='13' height='12' viewBox='0 0 13 12'><path d='M6.5,0.3 L12.9,11.6 H0.1 Z' fill='#e8821e'/><path d='M6.5,4 V7.8' stroke='#fff' stroke-width='1.3'/><circle cx='6.5' cy='9.6' r='0.75' fill='#fff'/></svg>
<div class='t' style='left:1179.5px;top:244.1px;font-size:10px;color:#b8322a;'>6 errors</div>
<svg style='left:1160px;top:242.8px' width='12' height='12' viewBox='0 0 12 12'><circle cx='6' cy='6' r='6' fill='#d9261c'/><path d='M3.7,3.7 L8.3,8.3 M8.3,3.7 L3.7,8.3' stroke='#fff' stroke-width='1.3'/></svg>
<div class='t' style='left:1153.0px;top:280.9px;font-size:13.3px;color:#201f1e;'>Job status errors</div>
<div class='pcard' style='top:304.5px;height:98.5px'></div>
<div class='t' style='left:1167.3px;top:320.0px;font-size:7.1px;font-weight:700;color:#000;'>Job ID</div>
<div class='t' style='left:1200.9px;top:320.0px;font-size:7.1px;font-weight:700;color:#000;'>Description</div>
<div class='t' style='left:1324.5px;top:320.0px;font-size:7.1px;font-weight:700;color:#000;'>Job stopped?</div>
<div class='a' style='left:1161px;top:332.9px;width:215.5999999999999px;height:1px;background:#e1dfdd'></div>
<div class='a' style='left:1161px;top:353.1px;width:215.5999999999999px;height:1px;background:#e1dfdd'></div>
<div class='a' style='left:1161px;top:373.6px;width:215.5999999999999px;height:1px;background:#e1dfdd'></div>
<div class='a' style='left:1161px;top:393.8px;width:215.5999999999999px;height:1px;background:#e1dfdd'></div>
<div class='t' style='left:1167.3px;top:340.5px;font-size:7.1px;color:#2b5c9a;text-decoration:underline;text-decoration-color:rgba(43,92,154,0.55);'>3130</div>
<div class='t' style='left:1200.9px;top:340.5px;font-size:7.1px;color:#323130;'>GL AcmeGT Payment Import - Credi...</div>
<div class='a' style='left:1324.5px;top:337.9px;width:12.5px;height:12.5px;background:#d0e2f4;border-radius:1px'></div>
<div class='t' style='left:1324.5px;width:12.5px;text-align:center;top:341.2px;font-size:6.2px;color:#323130'>Yes</div>
<div class='t' style='left:1167.3px;top:361.0px;font-size:7.1px;color:#2b5c9a;text-decoration:underline;text-decoration-color:rgba(43,92,154,0.55);'>3093</div>
<div class='t' style='left:1200.9px;top:361.0px;font-size:7.1px;color:#323130;'>ACMEGT - Payment Import.csv</div>
<div class='a' style='left:1324.5px;top:358.45px;width:12.5px;height:12.5px;background:#f3b5ad;border-radius:1px'></div>
<div class='t' style='left:1324.5px;width:12.5px;text-align:center;top:361.8px;font-size:6.2px;color:#323130'>No</div>
<div class='t' style='left:1167.3px;top:381.6px;font-size:7.1px;color:#2b5c9a;text-decoration:underline;text-decoration-color:rgba(43,92,154,0.55);'>2899</div>
<div class='t' style='left:1200.9px;top:381.6px;font-size:7.1px;color:#323130;'>CITIZENS_FT.TXT</div>
<div class='a' style='left:1324.5px;top:379.0px;width:12.5px;height:12.5px;background:#f3b5ad;border-radius:1px'></div>
<div class='t' style='left:1324.5px;width:12.5px;text-align:center;top:382.3px;font-size:6.2px;color:#323130'>No</div>
<div class='t' style='left:1153.0px;top:421.2px;font-size:13.3px;color:#201f1e;'>Favorite worksheets</div>
<div class='pcard' style='top:445.7px;height:98px'></div>
<div class='t' style='left:1167.3px;top:460.5px;font-size:7.0px;font-weight:700;color:#000;'>Title</div>
<svg style='left:1187.5px;top:458.8px' width='4' height='8' viewBox='0 0 4 8'><path d='M2,8 V0.8 M0.3,2.5 L2,0.8 L3.7,2.5' fill='none' stroke='#3a78c8' stroke-width='0.8'/></svg>
<div class='t' style='left:1236.6px;top:460.5px;font-size:7.0px;font-weight:700;color:#000;'>Description</div>
<div class='a' style='left:1161px;top:473.8px;width:215.5999999999999px;height:1px;background:#e1dfdd'></div>
<div class='a' style='left:1161px;top:494.0px;width:215.5999999999999px;height:1px;background:#e1dfdd'></div>
<div class='a' style='left:1161px;top:514.1px;width:215.5999999999999px;height:1px;background:#e1dfdd'></div>
<div class='a' style='left:1161px;top:535.0px;width:215.5999999999999px;height:1px;background:#e1dfdd'></div>
<div class='t' style='left:1167.3px;top:481.9px;font-size:6.5px;color:#2b5c9a;text-decoration:underline;text-decoration-color:rgba(43,92,154,0.55);'>CARRY FORWARD</div>
<div class='t' style='left:1236.6px;top:481.5px;font-size:7.0px;color:#323130;'>carry forward example TD 2022-01-10</div>
<div class='t' style='left:1167.3px;top:502.1px;font-size:6.5px;color:#2b5c9a;text-decoration:underline;text-decoration-color:rgba(43,92,154,0.55);'>CASH TARGET B</div>
<div class='t' style='left:1236.6px;top:501.7px;font-size:7.0px;color:#323130;'>Cash with target balance</div>
<div class='t' style='left:1167.3px;top:522.5px;font-size:6.5px;color:#2b5c9a;text-decoration:underline;text-decoration-color:rgba(43,92,154,0.55);'>CASH_BALANCE</div>
<div class='t' style='left:1236.6px;top:522.1px;font-size:7.0px;color:#323130;'>Cash balancing worksheet</div>
<div class='t' style='left:1153.0px;top:562.1px;font-size:13.9px;color:#201f1e;'>Notifications</div>
<div class='pcard' style='top:586.6px;height:98px'></div>
<div class='a' style='left:1159.6px;top:593.4px;width:40px;height:12.5px;border:1px solid #d2d0ce;border-radius:1px;background:#fff;overflow:hidden'><div class='a' style='left:0;top:0;width:14.3px;height:11px;background:#d3e3f3'></div></div>
<div class='t' style='left:1162.4px;top:597.6px;font-size:5.8px;color:#2b5c9a;'>All</div>
<div class='t' style='left:1177.3px;top:597.6px;font-size:5.8px;color:#323130;'>Unread</div>
<div class='t' style='left:1164.6px;top:616.9px;font-size:6.1px;font-weight:700;color:#000;'>Actions</div>
<div class='t' style='left:1225.7px;top:616.9px;font-size:6.1px;font-weight:700;color:#000;'>Description</div>
<div class='a' style='left:1159.6px;top:627.7px;width:218.4000000000001px;height:1px;background:#e1dfdd'></div>
<div class='a' style='left:1159.6px;top:644.1px;width:218.4000000000001px;height:1px;background:#e1dfdd'></div>
<div class='a' style='left:1159.6px;top:661.1px;width:218.4000000000001px;height:1px;background:#e1dfdd'></div>
<div class='a' style='left:1159.6px;top:677.2px;width:218.4000000000001px;height:1px;background:#e1dfdd'></div>
<div class='t' style='left:1225.7px;top:634.0px;font-size:5.9px;color:#2b5c9a;text-decoration:underline;text-decoration-color:rgba(43,92,154,0.55);'>Job ABCD is done running. You can proceed.</div>
<svg style='left:1164.5px;top:634.3px' width='6' height='5' viewBox='0 0 6 5'><path d='M0.3,2.6 L2.2,4.4 L5.7,0.6' fill='none' stroke='#8a8886' stroke-width='0.7'/></svg>
<svg style='left:1176.2px;top:633.5px' width='4' height='6' viewBox='0 0 4 6'><path d='M0,0 H3.6 V6 L1.8,4.6 L0,6 Z' fill='#323130'/></svg>
<div class='t' style='left:1225.7px;top:650.2px;font-size:5.9px;color:#2b5c9a;text-decoration:underline;text-decoration-color:rgba(43,92,154,0.55);'>Your event has ended</div>
<svg style='left:1164.5px;top:650.55px' width='6' height='5' viewBox='0 0 6 5'><path d='M0.3,2.6 L2.2,4.4 L5.7,0.6' fill='none' stroke='#8a8886' stroke-width='0.7'/></svg>
<svg style='left:1176.2px;top:649.75px' width='4' height='6' viewBox='0 0 4 6'><path d='M0,0 H3.6 V6 L1.8,4.6 L0,6 Z' fill='#323130'/></svg>
<div class='t' style='left:1225.7px;top:666.5px;font-size:5.9px;color:#2b5c9a;text-decoration:underline;text-decoration-color:rgba(43,92,154,0.55);'>Total cash balance is less than expected</div>
<svg style='left:1164.5px;top:666.8px' width='6' height='5' viewBox='0 0 6 5'><path d='M0.3,2.6 L2.2,4.4 L5.7,0.6' fill='none' stroke='#8a8886' stroke-width='0.7'/></svg>
<svg style='left:1176.2px;top:666.0px' width='4' height='6' viewBox='0 0 4 6'><path d='M0,0 H3.6 V6 L1.8,4.6 L0,6 Z' fill='#323130'/></svg>
<div class='t' style='left:1153.0px;top:703.5px;font-size:13.3px;color:#201f1e;'>Statements</div>
<div class='pcard' style='top:727.7px;height:98px'></div>
<div class='t' style='left:1167.3px;top:743.7px;font-size:7.0px;font-weight:700;color:#000;'>Title</div>
<svg style='left:1187.5px;top:742.0px' width='4' height='8' viewBox='0 0 4 8'><path d='M2,8 V0.8 M0.3,2.5 L2,0.8 L3.7,2.5' fill='none' stroke='#3a78c8' stroke-width='0.8'/></svg>
<div class='t' style='left:1236.6px;top:743.7px;font-size:7.0px;font-weight:700;color:#000;'>Description</div>
<div class='a' style='left:1161px;top:756.1px;width:215.5999999999999px;height:1px;background:#e1dfdd'></div>
<div class='a' style='left:1161px;top:776.3px;width:215.5999999999999px;height:1px;background:#e1dfdd'></div>
<div class='a' style='left:1161px;top:796.8px;width:215.5999999999999px;height:1px;background:#e1dfdd'></div>
<div class='a' style='left:1161px;top:817.2px;width:215.5999999999999px;height:1px;background:#e1dfdd'></div>
<div class='t' style='left:1167.3px;top:764.2px;font-size:6.5px;color:#2b5c9a;text-decoration:underline;text-decoration-color:rgba(43,92,154,0.55);'>CARRY FORWARD</div>
<div class='t' style='left:1236.6px;top:763.8px;font-size:7.0px;color:#323130;'>carry forward example TD 2022-01-10</div>
<div class='t' style='left:1167.3px;top:784.6px;font-size:6.5px;color:#2b5c9a;text-decoration:underline;text-decoration-color:rgba(43,92,154,0.55);'>CASH TARGET B</div>
<div class='t' style='left:1236.6px;top:784.2px;font-size:7.0px;color:#323130;'>Cash with target balance</div>
<div class='t' style='left:1167.3px;top:804.8px;font-size:6.5px;color:#2b5c9a;text-decoration:underline;text-decoration-color:rgba(43,92,154,0.55);'>CASH_BALANCE</div>
<div class='t' style='left:1236.6px;top:804.4px;font-size:7.0px;color:#323130;'>Cash balancing worksheet</div>
<div class='t' style='left:1153.0px;top:844.6px;font-size:13.3px;color:#201f1e;'>Tasks</div>
<div class='pcard' style='top:868.6px;height:98px'></div>
<div class='t' style='left:1167.3px;top:883.6px;font-size:7.0px;font-weight:700;color:#000;'>Title</div>
<svg style='left:1187.5px;top:881.9px' width='4' height='8' viewBox='0 0 4 8'><path d='M2,8 V0.8 M0.3,2.5 L2,0.8 L3.7,2.5' fill='none' stroke='#3a78c8' stroke-width='0.8'/></svg>
<div class='t' style='left:1236.6px;top:883.6px;font-size:7.0px;font-weight:700;color:#000;'>Description</div>
<div class='a' style='left:1161px;top:896.6px;width:215.5999999999999px;height:1px;background:#e1dfdd'></div>
<div class='a' style='left:1161px;top:916.9px;width:215.5999999999999px;height:1px;background:#e1dfdd'></div>
<div class='a' style='left:1161px;top:936.8px;width:215.5999999999999px;height:1px;background:#e1dfdd'></div>
<div class='a' style='left:1161px;top:957.4px;width:215.5999999999999px;height:1px;background:#e1dfdd'></div>
<div class='t' style='left:1167.3px;top:905.2px;font-size:6.5px;color:#2b5c9a;text-decoration:underline;text-decoration-color:rgba(43,92,154,0.55);'>CARRY FORWARD</div>
<div class='t' style='left:1236.6px;top:904.8px;font-size:7.0px;color:#323130;'>carry forward example TD 2022-01-10</div>
<div class='t' style='left:1167.3px;top:925.5px;font-size:6.5px;color:#2b5c9a;text-decoration:underline;text-decoration-color:rgba(43,92,154,0.55);'>CASH TARGET B</div>
<div class='t' style='left:1236.6px;top:925.1px;font-size:7.0px;color:#323130;'>Cash with target balance</div>
<div class='t' style='left:1167.3px;top:945.7px;font-size:6.5px;color:#2b5c9a;text-decoration:underline;text-decoration-color:rgba(43,92,154,0.55);'>CASH_BALANCE</div>
<div class='t' style='left:1236.6px;top:945.3px;font-size:7.0px;color:#323130;'>Cash balancing worksheet</div>
</body></html>
